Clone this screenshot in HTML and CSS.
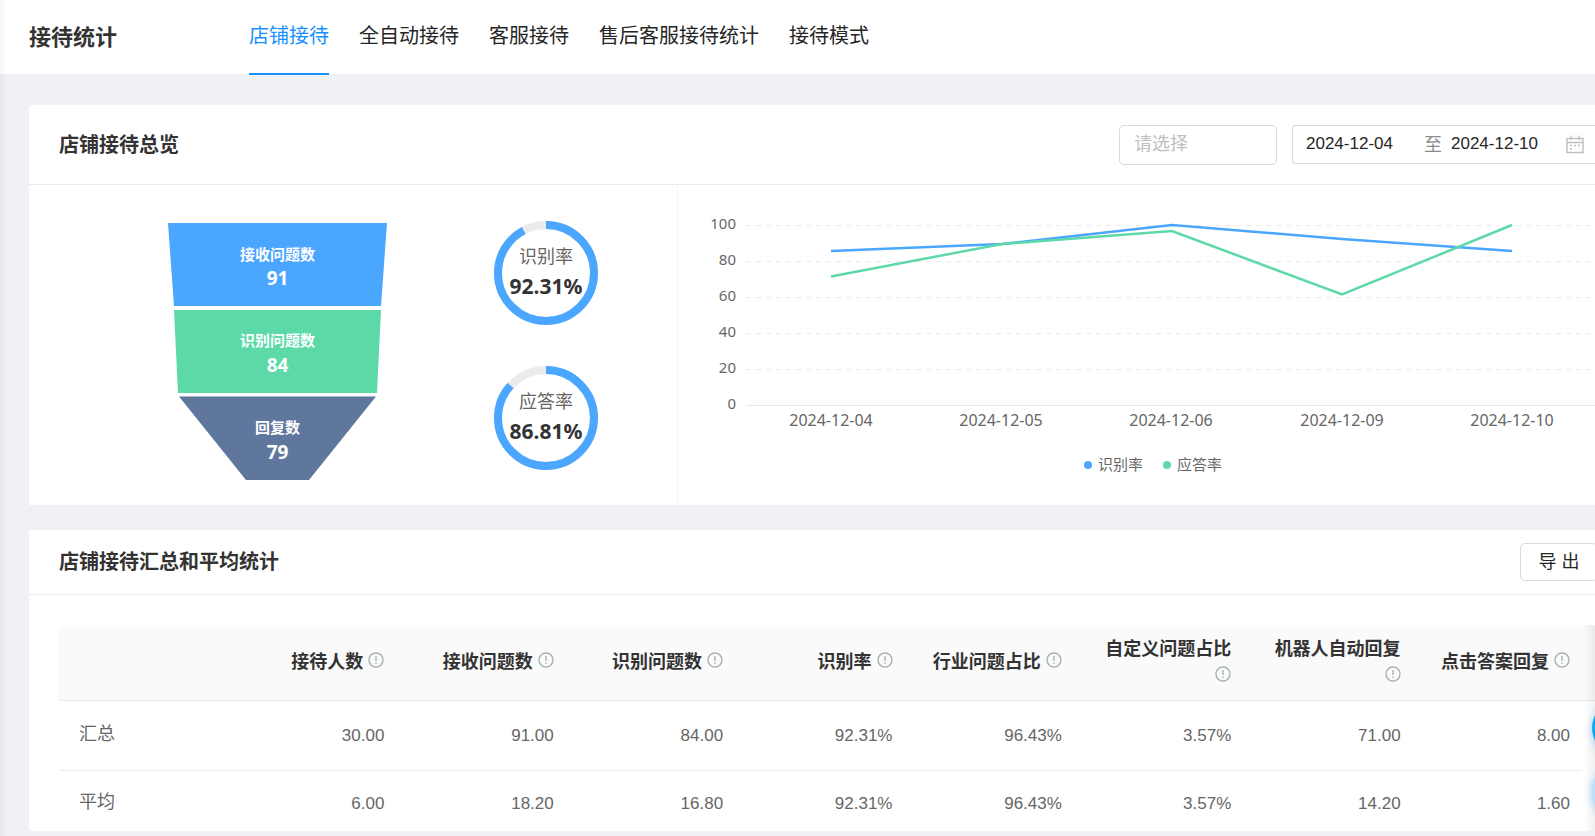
FILE: index.html
```html
<!DOCTYPE html>
<html lang="zh-CN">
<head>
<meta charset="utf-8">
<title>接待统计</title>
<link rel="stylesheet" href="styles.css">
</head>
<body>
<svg class="defs" aria-hidden="true">
  <symbol id="info" viewBox="0 0 16 16"><circle cx="8" cy="8" r="7" fill="none" stroke="currentColor" stroke-width="1.4"/><path d="M8 4v5M8 10.6v1.4" stroke="currentColor" stroke-width="1.4"/></symbol>
</svg>
<div class="app">
  <header class="topbar">
    <h1 class="page-title">接待统计</h1>
    <nav class="tabs">
      <a class="tab active" href="#shop">店铺接待</a>
      <a class="tab" href="#auto">全自动接待</a>
      <a class="tab" href="#service">客服接待</a>
      <a class="tab" href="#after">售后客服接待统计</a>
      <a class="tab" href="#mode">接待模式</a>
    </nav>
  </header>
  <main class="content">
    <section class="card">
      <div class="card-head overview-head">
        <h2 class="card-title">店铺接待总览</h2>
        <div class="filters">
          <input class="picker" type="text" placeholder="请选择" aria-label="请选择">
          <div class="range">
            <input class="date" type="text" value="2024-12-04" aria-label="开始日期">
            <span class="sep">至</span>
            <input class="date" type="text" value="2024-12-10" aria-label="结束日期">
            <svg class="calendar" viewBox="0 0 18 19"><path d="M1 3.500h16v14H1zM1 7.500h16M5 .5v4.500M13 .5v4.500" fill="none" stroke="currentColor" stroke-width="1.400"/><path d="M4 10.500h2M8 10.500h2M12 10.500h2M4 14h2" stroke="currentColor" stroke-width="1.600"/></svg>
          </div>
        </div>
      </div>
      <div class="overview">
        <div class="summary">
          <svg class="funnel" viewBox="0 0 220 258" role="img" aria-label="问题数漏斗">
            <path d="M0 0H219L213 83H6z" fill="#4aa6ff"/>
            <path d="M6 87H213L209 170H10z" fill="#5dd9a8"/>
            <path d="M11 173.500H208L141 257H78z" fill="#60779d"/>
            <g class="funnel-text">
              <text x="109.500" y="37">接收问题数</text><text class="num" x="109.500" y="62">91</text>
              <text x="109.500" y="123">识别问题数</text><text class="num" x="109.500" y="149">84</text>
              <text x="109.500" y="210">回复数</text><text class="num" x="109.500" y="236">79</text>
            </g>
          </svg>
          <div class="rings">
            <div class="ring">
              <svg viewBox="0 0 104 104"><circle class="track" cx="52" cy="52" r="48"/><circle class="bar" cx="52" cy="52" r="48" pathLength="100" stroke-dasharray="92.31 100" transform="rotate(-90 52 52)"/></svg>
              <div class="ring-text"><span>识别率</span><strong>92.31%</strong></div>
            </div>
            <div class="ring">
              <svg viewBox="0 0 104 104"><circle class="track" cx="52" cy="52" r="48"/><circle class="bar" cx="52" cy="52" r="48" pathLength="100" stroke-dasharray="86.81 100" transform="rotate(-90 52 52)"/></svg>
              <div class="ring-text"><span>应答率</span><strong>86.81%</strong></div>
            </div>
          </div>
        </div>
        <div class="trend">
          <svg class="chart" viewBox="0 0 890 210" role="img" aria-label="识别率与应答率趋势">
            <g class="grid">
              <path d="M38 10.500H890M38 46.500H890M38 82.500H890M38 118.500H890M38 154.500H890"/>
            </g>
            <path class="axis" d="M38 190.500H890"/>
            <g class="ylabels">
              <text x="28" y="14">100</text><text x="28" y="50">80</text><text x="28" y="86">60</text><text x="28" y="122">40</text><text x="28" y="158">20</text><text x="28" y="194">0</text>
            </g>
            <g class="xlabels">
              <text x="123" y="211">2024-12-04</text><text x="293" y="211">2024-12-05</text><text x="463" y="211">2024-12-06</text><text x="634" y="211">2024-12-09</text><text x="804" y="211">2024-12-10</text>
            </g>
            <path class="line blue" stroke-width="2.500" d="M123 36L294 29L464 10L634 24L804 36"/>
            <path class="line green" stroke-width="2.500" d="M123 61.500L294 29L464 16L634 79.500L804 10"/>
          </svg>
          <ul class="legend"><li class="key-blue">识别率</li><li class="key-green">应答率</li></ul>
        </div>
      </div>
    </section>

    <section class="card">
      <div class="card-head stats-head">
        <h2 class="card-title">店铺接待汇总和平均统计</h2>
        <button class="export" type="button">导 出</button>
      </div>
      <div class="table-wrap">
        <table class="stats">
          <thead>
            <tr>
              <th class="name"></th>
              <th>接待人数 <svg class="info"><use href="#info"/></svg></th>
              <th>接收问题数 <svg class="info"><use href="#info"/></svg></th>
              <th>识别问题数 <svg class="info"><use href="#info"/></svg></th>
              <th>识别率 <svg class="info"><use href="#info"/></svg></th>
              <th>行业问题占比 <svg class="info"><use href="#info"/></svg></th>
              <th>自定义问题占比 <svg class="info"><use href="#info"/></svg></th>
              <th>机器人自动回复 <svg class="info"><use href="#info"/></svg></th>
              <th>点击答案回复 <svg class="info"><use href="#info"/></svg></th>
              <th class="gutter"></th>
            </tr>
          </thead>
          <tbody>
            <tr><td class="name">汇总</td><td>30.00</td><td>91.00</td><td>84.00</td><td>92.31%</td><td>96.43%</td><td>3.57%</td><td>71.00</td><td>8.00</td><td class="gutter"></td></tr>
            <tr><td class="name">平均</td><td>6.00</td><td>18.20</td><td>16.80</td><td>92.31%</td><td>96.43%</td><td>3.57%</td><td>14.20</td><td>1.60</td><td class="gutter"></td></tr>
          </tbody>
        </table>
      </div>
    </section>
  </main>
</div>
<div class="floaters"><button class="float" type="button" aria-label="客服"></button><button class="float pale" type="button" aria-label="帮助"></button></div>
</body>
</html>
```
FILE: styles.css
```css
* { box-sizing: border-box; }
html { overflow: hidden; }
body {
  margin: 0;
  overflow: hidden;
  background: #f0f1f5;
  color: #333;
  font-family: "Liberation Sans", "Noto Sans CJK SC", sans-serif;
  font-size: 18px;
}
/* Shadow cast by the side menu */
body::before {
  content: "";
  position: fixed;
  inset: 0 auto 0 0;
  width: 8px;
  background: linear-gradient(to right, rgba(0, 0, 0, .03), transparent);
}
.defs { position: absolute; width: 0; height: 0; }
/* The report is wider than the viewport, its right edge is clipped */
.app { min-width: 1657px; min-height: 100vh; }
.topbar {
  display: flex;
  height: 74px;
  padding: 0 29px;
  background: #fff;
}
.page-title { margin: 0; width: 220px; font-size: 22px; line-height: 76px; }
.tabs { display: flex; gap: 30px; }
.tab {
  height: 75px;
  border-bottom: 2px solid transparent;
  color: #262626;
  font-size: 20px;
  line-height: 72px;
  text-decoration: none;
}
.tab.active { border-color: #1890ff; color: #1890ff; }
.content { display: grid; gap: 25px; padding: 31px 29px 5px; }
.card { background: #fff; min-width: 0; }
.card-head {
  display: flex;
  align-items: center;
  justify-content: space-between;
  padding: 0 30px;
  border-bottom: 1px solid #ebebeb;
}
.overview-head { height: 80px; }
.stats-head { height: 65px; }
.card-title { margin: 0; font-size: 20px; line-height: 30px; }
.filters { display: flex; gap: 15px; }
.picker {
  width: 158px;
  height: 40px;
  padding: 0 14px;
  border: 1px solid #d9d9d9;
  border-radius: 5px;
  font: inherit;
}
.picker::placeholder { color: #bfbfbf; }
.range {
  display: flex;
  align-items: center;
  width: 306px;
  height: 39px;
  padding: 0 13px;
  border: 1px solid #d9d9d9;
  border-radius: 3px;
}
.date {
  width: 92px;
  padding: 0;
  border: 0;
  background: none;
  color: #262626;
  font: inherit;
  font-size: 17px;
}
.sep { margin: 0 9px 0 26px; padding-bottom: 2px; color: #8c8c8c; }
.calendar { width: 18px; height: 19px; margin-left: auto; color: #bfbfbf; }
.overview { display: flex; height: 320px; }
.summary {
  display: flex;
  width: 651px;
  padding: 38px 0 0 139px;
  border-right: 1px solid #f7f7f7;
}
.funnel { width: 220px; height: 258px; }
.funnel-text text {
  fill: #fff;
  font: bold 15px "Noto Sans", "Noto Sans CJK SC", sans-serif;
  text-anchor: middle;
}
.funnel-text .num { font-size: 19px; }
.rings { display: grid; gap: 41px; align-content: start; margin: -2px 0 0 106px; }
.ring { display: grid; width: 104px; height: 104px; }
.ring > * { grid-area: 1 / 1; }
.ring circle { fill: none; stroke-width: 8; }
.track { stroke: #ebebeb; }
.bar { stroke: #4aa6ff; }
.ring-text {
  display: flex;
  flex-direction: column;
  align-items: center;
  padding-top: 21px;
  color: #666;
  line-height: 30px;
}
.ring-text strong { color: #333; font-family: "Noto Sans", sans-serif; font-size: 21px; line-height: 28px; }
.trend { flex: 1; padding: 30px 30px 0; }
.chart { display: block; width: 890px; height: 210px; overflow: visible; }
.chart text { fill: #666; font: 15px "Noto Sans", sans-serif; }
.ylabels text { text-anchor: end; }
.chart .xlabels text { font-size: 16px; text-anchor: middle; }
.grid { fill: none; stroke: #ebebeb; stroke-dasharray: 5 5; }
.axis { stroke: #e8e8e8; }
.line { fill: none; }
.line.blue { stroke: #4aa6ff; }
.line.green { stroke: #5dd9a8; }
.legend {
  display: flex;
  justify-content: center;
  gap: 20px;
  margin: 29px 0 0;
  padding: 0;
  list-style: none;
  color: #666;
  font-size: 15px;
  line-height: 22px;
}
.legend li { display: flex; align-items: center; gap: 6px; }
.legend li::before { content: ""; width: 8px; height: 8px; border-radius: 50%; }
.key-blue::before { background: #4aa6ff; }
.key-green::before { background: #5dd9a8; }
.export {
  width: 78px;
  height: 38px;
  padding: 0 0 4px;
  border: 1px solid #d9d9d9;
  border-radius: 5px;
  background: #fff;
  color: #262626;
  font: inherit;
}
.table-wrap {
  position: relative;
  max-height: calc(100vh - 630px);
  margin: 30px 30px 0;
  overflow: hidden;
  border-radius: 5px 5px 0 0;
}
.table-wrap::after {
  content: "";
  position: absolute;
  inset: 0 0 0 auto;
  width: 14px;
  background: linear-gradient(to right, transparent, rgba(0, 0, 0, .08));
}
.stats {
  width: 100%;
  border-collapse: separate;
  border-spacing: 0;
  table-layout: fixed;
}
.stats th {
  height: 76px;
  padding: 0 12px 0 20px;
  border-bottom: 1px solid #ebebeb;
  background: #fafafa;
  font-size: 18px;
  line-height: 27px;
  text-align: right;
}
.stats td {
  height: 70px;
  padding: 0 12px 0 20px;
  border-bottom: 1px solid #ebebeb;
  color: #666;
  font-size: 17px;
  line-height: 24px;
  text-align: right;
}
.stats tbody tr:last-child td { height: 66px; }
.stats .name { width: 168px; padding-bottom: 4px; font-size: 18px; text-align: left; }
.stats .gutter { width: 16px; padding: 0; }
.stats td.gutter { border: 0; }
.info { width: 16px; height: 16px; color: #a5b3b0; }
.floaters { position: fixed; top: 700px; right: -53px; display: grid; gap: 7px; }
.float {
  width: 56px;
  height: 56px;
  border: 0;
  border-radius: 50%;
  background: #0fa8f5;
  box-shadow: 0 2px 8px rgba(15, 140, 245, .35);
}
.float.pale { background: #b8e2ff; }
```
